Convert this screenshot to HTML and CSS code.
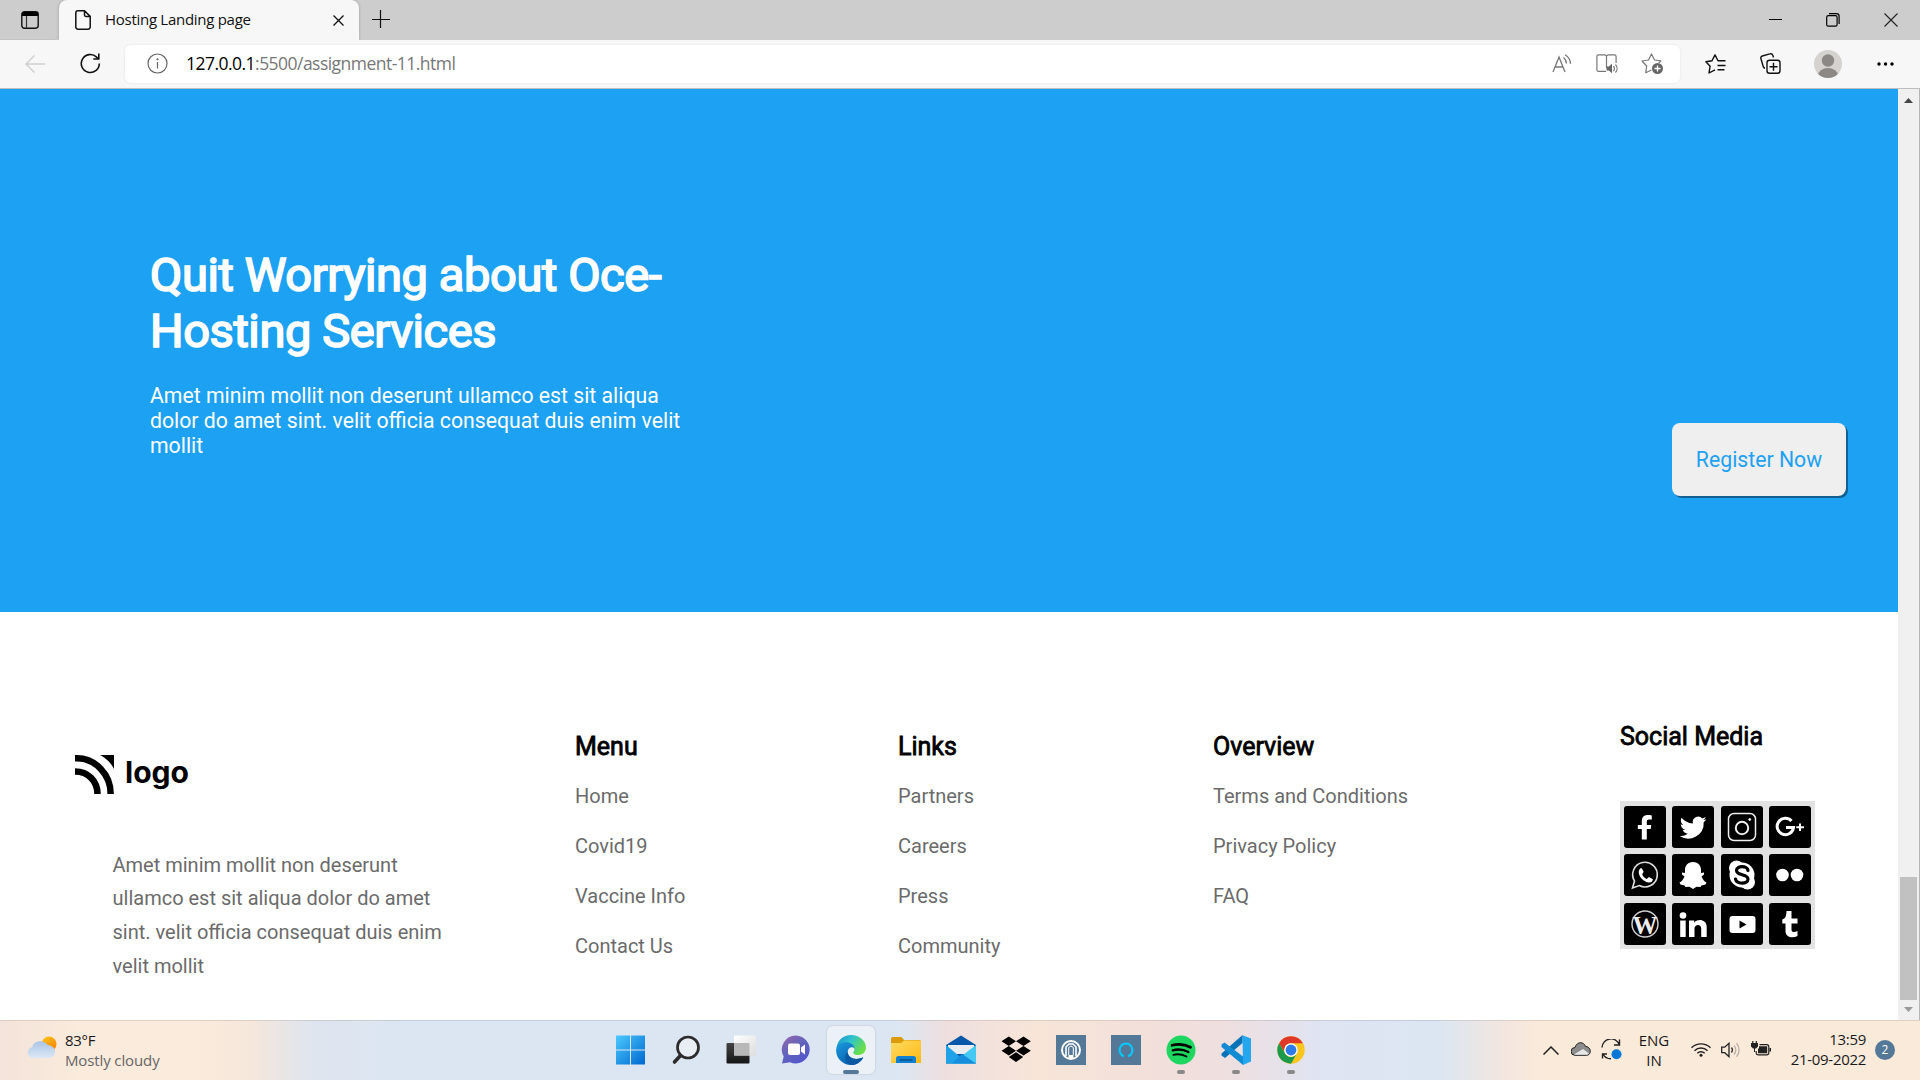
FILE: index.html
```html
<!DOCTYPE html>
<html lang="en">
<head>
<meta charset="utf-8">
<title>Hosting Landing page</title>
<link rel="stylesheet" href="styles.css">
</head>
<body>
<div class="screen">
  <header class="tabstrip">
    <div class="tab-actions">
      <svg width="18" height="18" viewBox="0 0 18 18"><rect x=".8" y=".8" width="16.4" height="16.4" rx="2.6" fill="none" stroke="#111" stroke-width="1.4"/><path d="M1 5V3a2 2 0 0 1 2-2h12a2 2 0 0 1 2 2v2z" fill="#000"/><path d="M5.5 5v12" stroke="#333" stroke-width="1.2"/></svg>
    </div>
    <div class="tab">
      <svg class="tab-page" width="16" height="20" viewBox="0 0 16 20" fill="none" stroke="#111" stroke-width="1.5"><path d="M3 .8h6.5L15.2 6.400V17a2.200 2.200 0 0 1-2.200 2.200H3A2.200 2.200 0 0 1 .8 17V3A2.200 2.200 0 0 1 3 .8zM9.500.8V5a1.400 1.400 0 0 0 1.400 1.400h4.300"/></svg>
      <span class="tab-title">Hosting Landing page</span>
      <svg class="tab-close" width="11" height="11" viewBox="0 0 11 11" stroke="#111" stroke-width="1.3"><path d="M.5.5l10 10M10.500.5l-10 10"/></svg>
    </div>
    <svg class="tab-new" width="18" height="18" viewBox="0 0 18 18" stroke="#111" stroke-width="1.200"><path d="M8.500 0v18M0 9.500h18"/></svg>
    <div class="window-buttons">
      <svg width="13" height="14" viewBox="0 0 13 14"><path d="M0 6.500h13" stroke="#000"/></svg>
      <svg width="14" height="14" viewBox="0 0 14 14" fill="none" stroke="#000" stroke-width="1.200"><rect x=".7" y="2.700" width="10.400" height="10.400" rx="1.600"/><path d="M3 .7h7.500a2.600 2.600 0 0 1 2.600 2.600V11"/></svg>
      <svg width="14" height="14" viewBox="0 0 14 14" stroke="#222" stroke-width="1.100"><path d="M.5.5l13 13M13.500.5l-13 13"/></svg>
    </div>
  </header>
  <div class="toolbar">
    <svg class="back" width="20" height="18" viewBox="0 0 20 18" fill="none" stroke="#cfcfcf" stroke-width="1.400"><path d="M20 9H1M9.500.5L1 9l8.500 8.500"/></svg>
    <svg class="reload" width="21" height="21" viewBox="0 0 21 21" fill="none" stroke="#111" stroke-width="1.600"><path d="M19.300 10.500A9 9 0 1 1 16.600 4.100L18.800 6M18.800.5V6h-5.500"/></svg>
    <div class="address">
      <svg class="info" width="21" height="21" viewBox="0 0 21 21" fill="none" stroke="#666" stroke-width="1.200"><circle cx="10.500" cy="10.500" r="9.500"/><path d="M10.500 9v6.500"/><circle cx="10.500" cy="6.300" r=".5" fill="#666"/></svg>
      <span class="url"><b>127.0.0.1</b>:5500/assignment-11.html</span>
      <svg class="read" width="20" height="20" viewBox="0 0 20 20" fill="none" stroke="#777" stroke-width="1.300"><path d="M1 18L7 3l6 15M3 13h8M11.500 3.500a8 8 0 0 1 3 6M13 .8a11 11 0 0 1 5.500 9"/></svg>
      <svg class="book" width="23" height="20" viewBox="0 0 23 20"><g fill="none" stroke="#777" stroke-width="1.200"><path d="M10 17.400H2.500A1.600 1.600 0 0 1 .9 15.800V2.400A1.600 1.600 0 0 1 2.500.8H9l1.500 1.200L12 .8h6.500a1.600 1.600 0 0 1 1.600 1.600V9M10.500 2v12M17.500 12a4 4 0 0 1 0 5M19.500 10.500a6 6 0 0 1 0 8"/></g><path d="M10.500 12.500h2.300l3.200-2.800v9.600l-3.200-2.800h-2.300z" fill="#666"/></svg>
      <svg class="star" width="23" height="22" viewBox="0 0 23 22"><path d="M10.500 17l-5.800 2.700 1-6.700L1 8l6.500-1L10.500.9 13.500 7l6.300.9-2 2.100" fill="none" stroke="#777" stroke-width="1.200" stroke-linejoin="round"/><circle cx="16.500" cy="15.500" r="5.500" fill="#666"/><path d="M16.500 12.500v6M13.500 15.500h6" stroke="#fff" stroke-width="1.300"/></svg>
    </div>
    <svg class="favs" width="21" height="20" viewBox="0 0 21 20" fill="none" stroke="#111" stroke-width="1.400" stroke-linejoin="round"><path d="M10 15.800L4 19l1.100-6.800L.9 7.700 7 6.700 10 .9l3 5.800h7.500M12.500 11.500h8M12.500 15.800h7"/></svg>
    <svg class="collections" width="21" height="21" viewBox="0 0 21 21" fill="none" stroke="#111" stroke-width="1.400"><rect x="7" y="7.200" width="13" height="13" rx="2.500"/><path d="M13.500 9.800v8M9.500 13.800h8M13.500 4.500l-.6-2A2.500 2.500 0 0 0 9.800.9L2.300 3A2 2 0 0 0 .9 5.500l2.300 8A2.500 2.500 0 0 0 5 15.200"/></svg>
    <svg class="avatar" width="28" height="28" viewBox="0 0 28 28"><defs><clipPath id="face"><circle cx="14" cy="14" r="14"/></clipPath></defs><g clip-path="url(#face)"><path d="M0 0h28v28H0z" fill="#d5d3d0"/><g fill="#8c8885"><circle cx="14" cy="10.500" r="6.200"/><ellipse cx="14" cy="25.500" rx="10" ry="7.500"/></g></g></svg>
    <svg class="more" width="17" height="4" viewBox="0 0 17 4"><circle cx="2" cy="2" r="1.700"/><circle cx="8.500" cy="2" r="1.700"/><circle cx="15" cy="2" r="1.700"/></svg>
  </div>
  <div class="viewport">
    <main class="page">
      <section class="banner">
        <div class="banner-copy">
          <h1>Quit Worrying about Oce-<br>Hosting Services</h1>
          <p>Amet minim mollit non deserunt ullamco est sit aliqua<br>dolor do amet sint. velit officia consequat duis enim velit<br>mollit</p>
        </div>
        <button class="register">Register Now</button>
      </section>
      <footer class="footer">
        <div class="brand">
          <svg class="brand-logo" width="140" height="45" viewBox="0 0 140 45"><g fill="none" stroke="#000" stroke-width="6.500"><path d="M0 3.300h2C20 3.300 35.700 19 35.700 39"/><path d="M0 16.500C13 16.500 22.500 26 22.500 39"/></g><path d="M25 0h14v14C36 8 31 3 25 0z"/><text x="50" y="28" textLength="64" lengthAdjust="spacingAndGlyphs">logo</text></svg>
          <p>Amet minim mollit non deserunt<br>ullamco est sit aliqua dolor do amet<br>sint. velit officia consequat duis enim<br>velit mollit</p>
        </div>
        <nav class="links menu"><h2>Menu</h2><ul><li>Home</li><li>Covid19</li><li>Vaccine Info</li><li>Contact Us</li></ul></nav>
        <nav class="links company"><h2>Links</h2><ul><li>Partners</li><li>Careers</li><li>Press</li><li>Community</li></ul></nav>
        <nav class="links overview"><h2>Overview</h2><ul><li>Terms and Conditions</li><li>Privacy Policy</li><li>FAQ</li></ul></nav>
        <div class="social">
          <h2>Social Media</h2>
          <div class="social-grid">
            <svg viewBox="0 0 42 42"><path d="M17.800 33.500V23h-4v-4h4v-3.500c0-4.500 2.300-6.500 6-6.500 1.500 0 3 .2 4 .4v4.100h-2.500c-1.800 0-2.500.8-2.500 2.200V19h4.500l-.6 4h-3.900v10.500z" fill="#fff"/></svg>
            <svg viewBox="0 0 24 24"><path transform="translate(-.3 .2) scale(1.020)" fill="#fff" d="M19.600 7.200c-.55.25-1.150.4-1.750.5.650-.4 1.100-1 1.350-1.700-.6.350-1.250.6-1.950.75A3.070 3.070 0 0 0 12 9.550c-2.550-.1-4.850-1.350-6.350-3.200-.8 1.400-.4 3.200.95 4.100-.5 0-1-.15-1.400-.4 0 1.450 1 2.750 2.450 3.050-.45.100-.9.150-1.400.05.400 1.200 1.550 2.100 2.900 2.150A6.200 6.200 0 0 1 4.600 16.600a8.700 8.700 0 0 0 13.450-7.750c.6-.45 1.100-1 1.550-1.650z"/></svg>
            <svg viewBox="0 0 42 42" fill="none" stroke="#eee"><rect x="7.500" y="7.500" width="27" height="27" rx="5.500" stroke-width="1.500"/><circle cx="21" cy="22" r="6.200" stroke-width="2"/><circle cx="28.700" cy="13.500" r="1" fill="#fff"/></svg>
            <svg viewBox="0 0 42 42" fill="none" stroke="#fff"><path d="M22.500 15A8.200 8.200 0 1 0 24.500 21.500H17" stroke-width="3"/><path d="M31 17.500v7.500M27.300 21.200H35" stroke-width="2"/></svg>
            <svg viewBox="0 0 42 42"><path d="M8.500 34l2-7A12.300 12.300 0 1 1 15.300 31.500z" fill="none" stroke="#ddd" stroke-width="1.600"/><path d="M17.500 14l2.200 3.800-1.500 2.500c1 2.500 2.500 3.700 4.500 4.700l2.200-2 4 2.300c-.2 2.300-2 3.700-4.500 3.200-5.500-1.200-9-5.500-9.600-9.500-.3-2.500.8-4.700 2.700-5z" fill="#fff"/></svg>
            <svg viewBox="0 0 42 42"><path d="M21 8c5.500 0 8 4 8 8v3l3-.5v2l-2.500 2c1.500 3.500 3 5 5 6l-1 2-4 1-1 1.500-4-.3L21 35l-3.500-2.300-4 .3-1-1.500-4-1-1-2c2-1 3.500-2.500 5-6l-2.500-2v-2l3 .5v-3c0-4 2.500-8 8-8z" fill="#fff"/></svg>
            <svg viewBox="0 0 42 42"><circle cx="21" cy="21" r="12.500" fill="#fff"/><circle cx="15.500" cy="14" r="7.500" fill="#fff"/><circle cx="26.500" cy="28" r="7.500" fill="#fff"/><path d="M27 16.500c-.5-5-11.500-5.200-11.500 0 0 5.500 11.500 3 11.500 8.700 0 5.300-11.500 5.300-12.500-.2" fill="none" stroke="#000" stroke-width="3.200" stroke-linecap="round"/></svg>
            <svg viewBox="0 0 42 42" fill="#fff"><circle cx="13.500" cy="21" r="6.300"/><circle cx="28" cy="21" r="6.300"/></svg>
            <svg viewBox="0 0 42 42"><circle cx="21" cy="21" r="13" fill="none" stroke="#ccc" stroke-width="1.500"/><text class="wp" x="21" y="31" text-anchor="middle" textLength="25" lengthAdjust="spacingAndGlyphs">W</text></svg>
            <svg viewBox="0 0 42 42" fill="#fff"><circle cx="11" cy="12.500" r="3.300"/><path d="M8.200 17.500h5.500V34H8.200zM17 17.500h5.200v2.200c2.500-4.200 12.500-4 12.500 4.300v10h-5.500v-8.500c0-5-6.700-4.500-6.700 0V34H17z"/></svg>
            <svg viewBox="0 0 42 42"><rect x="8.500" y="13" width="26" height="17" rx="3" fill="#fff"/><path d="M18.500 17.500l7 4-7 4z"/></svg>
            <svg viewBox="0 0 42 42"><path d="M17.500 8h5v7.500h6v5h-6v6c0 3 2.500 3 6 1.500v5c-5 2.500-12 1.500-12-5v-7.500h-3.200v-4c3-.8 4.200-4 4.200-8.500z" fill="#fff"/></svg>
          </div>
        </div>
      </footer>
    </main>
    <aside class="scrollbar">
      <svg class="up" width="9" height="5" viewBox="0 0 9 5"><path d="M4.500 0L9 5H0z" fill="#444"/></svg>
      <div class="thumb"></div>
      <svg class="down" width="9" height="5" viewBox="0 0 9 5"><path d="M4.500 5L0 0h9z" fill="#999"/></svg>
    </aside>
  </div>
  <div class="taskbar">
    <div class="weather">
      <svg width="30" height="24" viewBox="0 0 30 24"><defs><linearGradient id="sun" x2=".8" y2="1"><stop stop-color="#ffc913"/><stop offset="1" stop-color="#f58000"/></linearGradient><linearGradient id="cloud" x2="0" y2="1"><stop stop-color="#a9c4e6"/><stop offset="1" stop-color="#dce8f6"/></linearGradient></defs><circle cx="22" cy="8" r="7.500" fill="url(#sun)"/><path d="M6 22a5.500 5.500 0 0 1-1-10.800A8.800 8.800 0 0 1 20.500 9c5 .5 7.500 3.500 7.500 6.500 0 4-2.500 6.500-6 6.500z" fill="url(#cloud)"/></svg>
      <div class="weather-text"><span>83°F</span><span class="muted">Mostly cloudy</span></div>
    </div>
    <div class="apps">
      <div class="app"><svg viewBox="0 0 30 30"><defs><linearGradient id="win" gradientUnits="userSpaceOnUse" x1="0" y1="0" x2="29" y2="29"><stop stop-color="#4ccaff"/><stop offset="1" stop-color="#0068d0"/></linearGradient></defs><path d="M0 .5h14v14H0zM15 .5h14v14H15zM0 15.500h14v14H0zM15 15.500h14v14H15z" fill="url(#win)"/></svg></div>
      <div class="app"><svg viewBox="0 0 30 30" fill="none" stroke="#2b2b2b"><circle cx="17" cy="12.500" r="10.500" stroke-width="2.700" fill="#e9eef5"/><path d="M9.500 20.500l-6 6.500" stroke-width="3.600" stroke-linecap="round"/></svg></div>
      <div class="app"><svg viewBox="0 0 30 30"><defs><linearGradient id="tv" x2="0" y2="1"><stop stop-color="#444"/><stop offset="1" stop-color="#151515"/></linearGradient><linearGradient id="tw" x2="1" y2="1"><stop stop-color="#fff"/><stop offset="1" stop-color="#ddd"/></linearGradient></defs><rect x=".5" y="8" width="23" height="20.500" rx="1" fill="url(#tv)"/><rect x="8" y=".5" width="22" height="20" rx="1" fill="url(#tw)"/><path d="M8 8h15.500v12.500H8z" fill="#b8b8b8"/></svg></div>
      <div class="app"><svg viewBox="0 0 30 30"><defs><linearGradient id="chat" x2=".7" y2="1"><stop stop-color="#9a68a9"/><stop offset=".5" stop-color="#6264bd"/><stop offset="1" stop-color="#5355cb"/></linearGradient></defs><path d="M15 .5a14 14 0 1 1-6 26.800L1 28.500l1.700-7A14 14 0 0 1 15 .5z" fill="url(#chat)"/><rect x="7" y="8.500" width="12" height="11.500" rx="2" fill="#fff"/><path d="M20 12.500l4-3v10l-4-3z" fill="#fff"/></svg></div>
      <div class="app active"><svg viewBox="0 0 30 30"><defs><linearGradient id="e1" x2="1" y2=".5"><stop stop-color="#178ed0"/><stop offset=".5" stop-color="#30c3cc"/><stop offset="1" stop-color="#6bdf47"/></linearGradient><linearGradient id="e2" x2=".8" y2="1"><stop stop-color="#199adf"/><stop offset="1" stop-color="#0856a5"/></linearGradient></defs><path d="M.5 13C1.500 5 7.500 0 15 0c8.500 0 15 6 15 12.500 0 5-4 7.500-8 7.500-3.500 0-5.500-1.500-4.500-3 2.500-4-1-7.500-5.500-7.500C6.500 9.500 3 12 .5 13z" fill="url(#e1)"/><path d="M.1 15C.5 9 6 7.200 10 7.300c4.500 0 8 2.500 8.700 6.200-2-2.500-7-1.500-7 3.500 0 6 8 9 15.500 5.200C26 26.500 20.500 30 15 30 7 30-.2 23.500.1 15z" fill="url(#e2)"/><path d="M11.700 17c0 6 8 9 15.500 5.200C25 27 20 30 16 30c-7-1-9-10-4.300-13z" fill="#0c59a4"/></svg><i class="mark wide"></i></div>
      <div class="app"><svg viewBox="0 0 30 30"><defs><linearGradient id="fold" x2="1" y2="1"><stop stop-color="#ffdc62"/><stop offset="1" stop-color="#fdb813"/></linearGradient></defs><path d="M0 3.500A1.500 1.500 0 0 1 1.500 2h9L13 5h16.500v5H0z" fill="#dd9b0a"/><path d="M0 8h10l3-2.500h17V28H0z" fill="url(#fold)"/><path d="M5 28v-4.500A2.500 2.500 0 0 1 7.500 21h15a2.500 2.500 0 0 1 2.500 2.500V28z" fill="#1280d0"/><path d="M8.500 25h13" stroke="#08508c" stroke-width="1.500"/></svg></div>
      <div class="app"><svg viewBox="0 0 30 30"><path d="M0 10L15 .5 30 10v18.500H0z" fill="#0758a8"/><path d="M2 10h26v9H2z" fill="#e9edf1"/><path d="M0 10l22 18.500H0z" fill="#1fa2e8"/><path d="M30 10v18.500H6z" fill="#44c9f3"/><path d="M30 28.500L16 19 6 28.500z" fill="#178ddd"/></svg></div>
      <div class="app"><svg viewBox="0 0 30 30"><path d="M7.800 1.500L15 6.200l-7.200 4.700L.5 6.200zM22.500 1.500l7.300 4.700-7.300 4.700L15 6.200zM7.800 11.100l7.200 4.700-7.200 4.700-7.300-4.700zM22.500 11.100l7.300 4.700-7.300 4.700L15 15.800zM15 17.300l7.200 4.700-7.200 5-7.200-5z"/></svg></div>
      <div class="app"><svg viewBox="0 0 30 30"><path d="M0 0h30v30H0z" fill="#547898"/><circle cx="15" cy="15" r="9" fill="none" stroke="#fff" stroke-width="2"/><path d="M10 21V12l3-3h4l3 3v9" fill="none" stroke="#fff" stroke-width="1.600"/><path d="M12.500 20h5v4h-5z" fill="#fff"/><path d="M12.700 20v-7.500l2.300-1.500 2.300 1.500V20" fill="none" stroke="#fff" stroke-width="1"/></svg></div>
      <div class="app"><svg viewBox="0 0 30 30"><path d="M0 0h30v30H0z" fill="#547898"/><path d="M13 21.300a6.500 6.500 0 1 1 4 0" fill="none" stroke="#00caff" stroke-width="2"/></svg></div>
      <div class="app"><svg viewBox="0 0 30 30"><circle cx="15" cy="15" r="14.500" fill="#1ed760"/><g fill="none" stroke="#000" stroke-linecap="round"><path d="M6 10.300c6-1.700 13-1 18.500 2" stroke-width="2.700"/><path d="M6.700 15.300c5.500-1.500 11-.8 15.700 1.800" stroke-width="2.300"/><path d="M7.300 19.800c5-1.200 9-.5 13.200 1.700" stroke-width="1.900"/></g></svg><i class="mark"></i></div>
      <div class="app"><svg viewBox="0 0 30 30"><path d="M21.500.2L30 3.500v23l-8 3.500z" fill="#25a7ef"/><path d="M21.500 0v8L4 23 .5 20.500v-2z" fill="#0673b8"/><path d="M22 30v-8.500L3.500 7.500.5 9.500v2.500z" fill="#118bd2"/></svg><i class="mark"></i></div>
      <div class="app"><svg viewBox="0 0 30 30"><circle cx="15" cy="15" r="13.700" fill="#fcc61c"/><path d="M3.100 8.200A13.700 13.700 0 0 1 26.900 8.200H15A6.800 6.800 0 0 0 9 18z" fill="#df3829"/><path d="M3.100 8.200A13.700 13.700 0 0 0 15 28.700l6-10.400a6.800 6.800 0 0 1-12 0z" fill="#1c9a4b"/><circle cx="15" cy="15" r="6.800" fill="#fff"/><circle cx="15" cy="15" r="5.400" fill="#2f7bea"/></svg><i class="mark"></i></div>
    </div>
    <div class="tray">
      <svg class="chev" width="16" height="9" viewBox="0 0 16 9" fill="none" stroke="#222" stroke-width="1.500"><path d="M.5 8.500L8 1l7.500 7.500"/></svg>
      <svg class="onedrive" width="20" height="14" viewBox="0 0 20 14"><path d="M4 13.300A3.600 3.600 0 0 1 4 5.500C6-1 13-.5 14.500 4.500c6 0 6.500 8.800.8 8.800z" fill="#8c8c8c" stroke="#222" stroke-width="1"/><path d="M3 12.500L12 7l6 4.500-2 1.200H4z" fill="#e8e8e8"/></svg>
      <svg class="sync" width="21" height="21" viewBox="0 0 21 21" fill="none" stroke="#222" stroke-width="1.400"><path d="M1 8.500A9 9 0 0 1 18.500 6M18.500.5V6H13M10 19.800A9 9 0 0 1 2 15M1.500 19.500V15H6"/><circle cx="15.500" cy="15.200" r="5" fill="#0078d7" stroke="none"/></svg>
      <div class="lang">ENG<br>IN</div>
      <svg class="wifi" width="20" height="15" viewBox="0 0 20 15" fill="none" stroke="#222" stroke-width="1.400"><path d="M.5 5.800a13.500 13.500 0 0 1 19 0M3.500 8.700a9.200 9.200 0 0 1 13 0M6.300 11.300a5.300 5.300 0 0 1 7.400 0"/><circle cx="10" cy="13.200" r="1.500" fill="#222" stroke="none"/></svg>
      <svg class="sound" width="20" height="16" viewBox="0 0 20 16" fill="none" stroke-width="1.300"><path d="M.7 5.200h3L8 1.300v13.400l-4.300-4H.7z" stroke="#222"/><path d="M10.500 5.500a4 4 0 0 1 0 5" stroke="#333"/><path d="M13 3.500a6.500 6.500 0 0 1 0 9M15.500 1.300a10 10 0 0 1 0 13.400" stroke="#bbb1a8"/></svg>
      <svg class="battery" width="20" height="16" viewBox="0 0 20 16"><path d="M8.500 3.700H16a1.800 1.800 0 0 1 1.800 1.800v6.500a1.800 1.800 0 0 1-1.800 1.800H7A1.800 1.800 0 0 1 5.200 12v-2" fill="none" stroke="#222" stroke-width="1.200"/><path d="M8 5.300h8.200v7H7V8L8 7zM18.500 7H20v3.500h-1.500zM0 2h7v3.500L5 7.500H4V11H3V7.500H2L0 5.500zM1.200 0h1.200v3H1.200zM4.700 0h1.200v3H4.700z" fill="#222"/></svg>
      <div class="clock">13:59<br>21-09-2022</div>
      <div class="count">2</div>
    </div>
  </div>
</div>
</body>
</html>
```
FILE: styles.css
```css
* { box-sizing: border-box; }
body, h1, h2, p, ul { margin: 0; padding: 0; }
body { width: 1920px; height: 1080px; overflow: hidden; background: #fff; }
svg { display: block; flex: none; }

.screen { width: 1920px; height: 1080px; display: flex; flex-direction: column; font-family: "Open Sans", "Noto Sans", sans-serif; }

/* Browser chrome */
.tabstrip { height: 40px; background: #cdcdcd; display: flex; }
.tab-actions { width: 59px; padding: 11px 0 0 21px; border-bottom: 1px solid #c3c3c3; border-radius: 0 0 6px 0; }
.tab { width: 300px; height: 40px; background: #f7f7f7; border-radius: 8px 8px 0 0; display: flex; align-items: center; padding: 0 15.500px 0 16px; box-shadow: 0 0 3px rgba(0, 0, 0, .25); clip-path: inset(0 -4px 0 -4px); }
.tab-title { margin-left: 14px; padding-bottom: 2px; font-size: 15px; letter-spacing: -.28px; color: #111; white-space: nowrap; }
.tab-close { margin-left: auto; }
.tab-new { margin: 10px 0 0 13px; }
.window-buttons { margin: 13px 22px 0 auto; display: flex; gap: 44px; }

.toolbar { height: 49px; background: #f7f7f7; border-bottom: 1px solid #bdbdbd; display: flex; align-items: center; padding-bottom: 1px; }
.back { margin-left: 25px; }
.reload { margin-left: 35px; }
.address { width: 1555px; height: 38px; margin-left: 24px; background: #fff; border-radius: 6px; box-shadow: 0 0 3px rgba(0, 0, 0, .08); display: flex; align-items: center; }
.info { margin-left: 22px; }
.url { margin-left: 18px; width: 1345px; padding-bottom: 1px; font-size: 17.500px; letter-spacing: -.53px; color: #777; }
.url b { font-weight: 400; color: #000; }
.read { margin-left: 21px; }
.book { margin-left: 24px; }
.star { margin-left: 22px; }
.favs { margin-left: 25px; }
.collections { margin-left: 34px; }
.avatar { margin-left: 33px; }
.more { margin-left: 35px; }

/* Web page */
.viewport { height: 931px; display: flex; }
.page { width: 1898px; font-family: Roboto, "Liberation Sans", sans-serif; }
.banner { height: 523px; background: #1da1f2; color: #fff; display: flex; justify-content: space-between; padding: 158px 52px 0 150px; }
h1 { font-size: 47px; line-height: 56px; font-weight: 400; letter-spacing: -.4px; -webkit-text-stroke: 1.7px #fff; }
.banner-copy p { margin-top: 24px; font-size: 21.240px; line-height: 25px; }
.register { width: 174px; height: 73px; margin-top: 176px; border: 0; border-radius: 8px; background: #efefef; box-shadow: 2px 2px rgba(0, 0, 0, .4); color: #1da1f2; font: 21.240px Roboto, sans-serif; white-space: nowrap; }

.footer { height: 408px; display: flex; padding-left: 75px; }
.brand { width: 500px; padding-top: 143px; }
.brand-logo { overflow: visible; }
.brand-logo text { font: 700 30px Inter, sans-serif; }
.brand p { margin: 48.500px 0 0 37.500px; font-size: 20px; line-height: 33.750px; color: #6b6b6b; }
h2 { font-size: 25px; line-height: 30px; font-weight: 400; color: #000; -webkit-text-stroke: .8px #000; white-space: nowrap; }
.links { padding-top: 120px; }
.menu { width: 323px; }
.company { width: 315px; }
.overview { width: 407px; }
.links ul { list-style: none; margin-top: 9px; font-size: 20px; line-height: 50px; color: #6b6b6b; }
.social { padding-top: 110px; }
.social-grid { width: 195px; height: 148px; margin-top: 49px; padding: 4.500px 4px; background: #e2e2e2; display: grid; grid-template-columns: repeat(4, 42px); grid-auto-rows: 42px; justify-content: space-between; align-content: space-between; }
.social-grid svg { width: 42px; height: 42px; background: #000; border-radius: 3px; }
.wp { font: 700 25px "Liberation Serif", serif; fill: #eee; }

.scrollbar { width: 22px; background: #f0f0f0; border-right: 1px solid #b5b5b5; padding-top: 9px; display: flex; flex-direction: column; }
.up { margin-left: 6px; }
.thumb { width: 17px; height: 123px; margin: 774px 0 0 2px; background: #c1c1c1; }
.down { margin: 7px 0 0 6px; }

/* Taskbar */
.taskbar { height: 60px; display: flex; color: #1a1a1a; border-top: 1px solid rgba(120, 110, 110, .2); background: linear-gradient(90deg, #f3e3da 0, #faebdc 80px, #faebdc 190px, #f6e7db 250px, #dfe4ee 310px, #dbe6f2 400px, #dce6f2 900px, #eedfdf 945px, #f8e5d8 1040px, #f2dfda 1150px, #eedfe0 1230px, #dfe4f2 1320px, #dbe6f2 1440px, #f3e6df 1505px, #faeada 1540px, #faeada 1920px); }
.weather { width: 603px; padding: 15px 0 0 27px; display: flex; }
.weather-text { margin: -6px 0 0 8px; display: flex; flex-direction: column; font-size: 15px; line-height: 20px; letter-spacing: -.3px; }
.muted { color: #666; letter-spacing: -.12px; }
.apps { display: flex; padding-top: 5px; }
.app { width: 48px; height: 48px; margin: 0 3.500px; padding-top: 9px; position: relative; border-radius: 6px; display: flex; justify-content: center; }
.app svg { width: 30px; height: 30px; }
.active { background: rgba(255, 255, 255, .45); box-shadow: 0 0 2px rgba(0, 0, 0, .2); }
.mark { position: absolute; left: 20px; bottom: 0; width: 8px; height: 4px; border-radius: 2px; background: #888; }
.mark.wide { left: 16px; width: 16px; background: #547898; }
.tray { margin-left: 225px; display: flex; align-items: flex-start; font-size: 15px; line-height: 20px; }
.chev { margin-top: 25px; }
.onedrive { margin: 21px 0 0 12px; }
.sync { margin: 18px 0 0 10px; }
.lang { width: 50px; margin: 9px 0 0 7px; text-align: center; }
.wifi { margin: 21px 0 0 12px; }
.sound { margin: 21px 0 0 10px; }
.battery { margin: 20px 0 0 10px; }
.clock { width: 90px; margin: 8px 0 0 5px; text-align: right; letter-spacing: -.3px; white-space: nowrap; }
.count { width: 20px; height: 20px; margin: 19px 0 0 9px; border-radius: 50%; background: #547898; color: #fff; font-size: 12px; text-align: center; }
```
